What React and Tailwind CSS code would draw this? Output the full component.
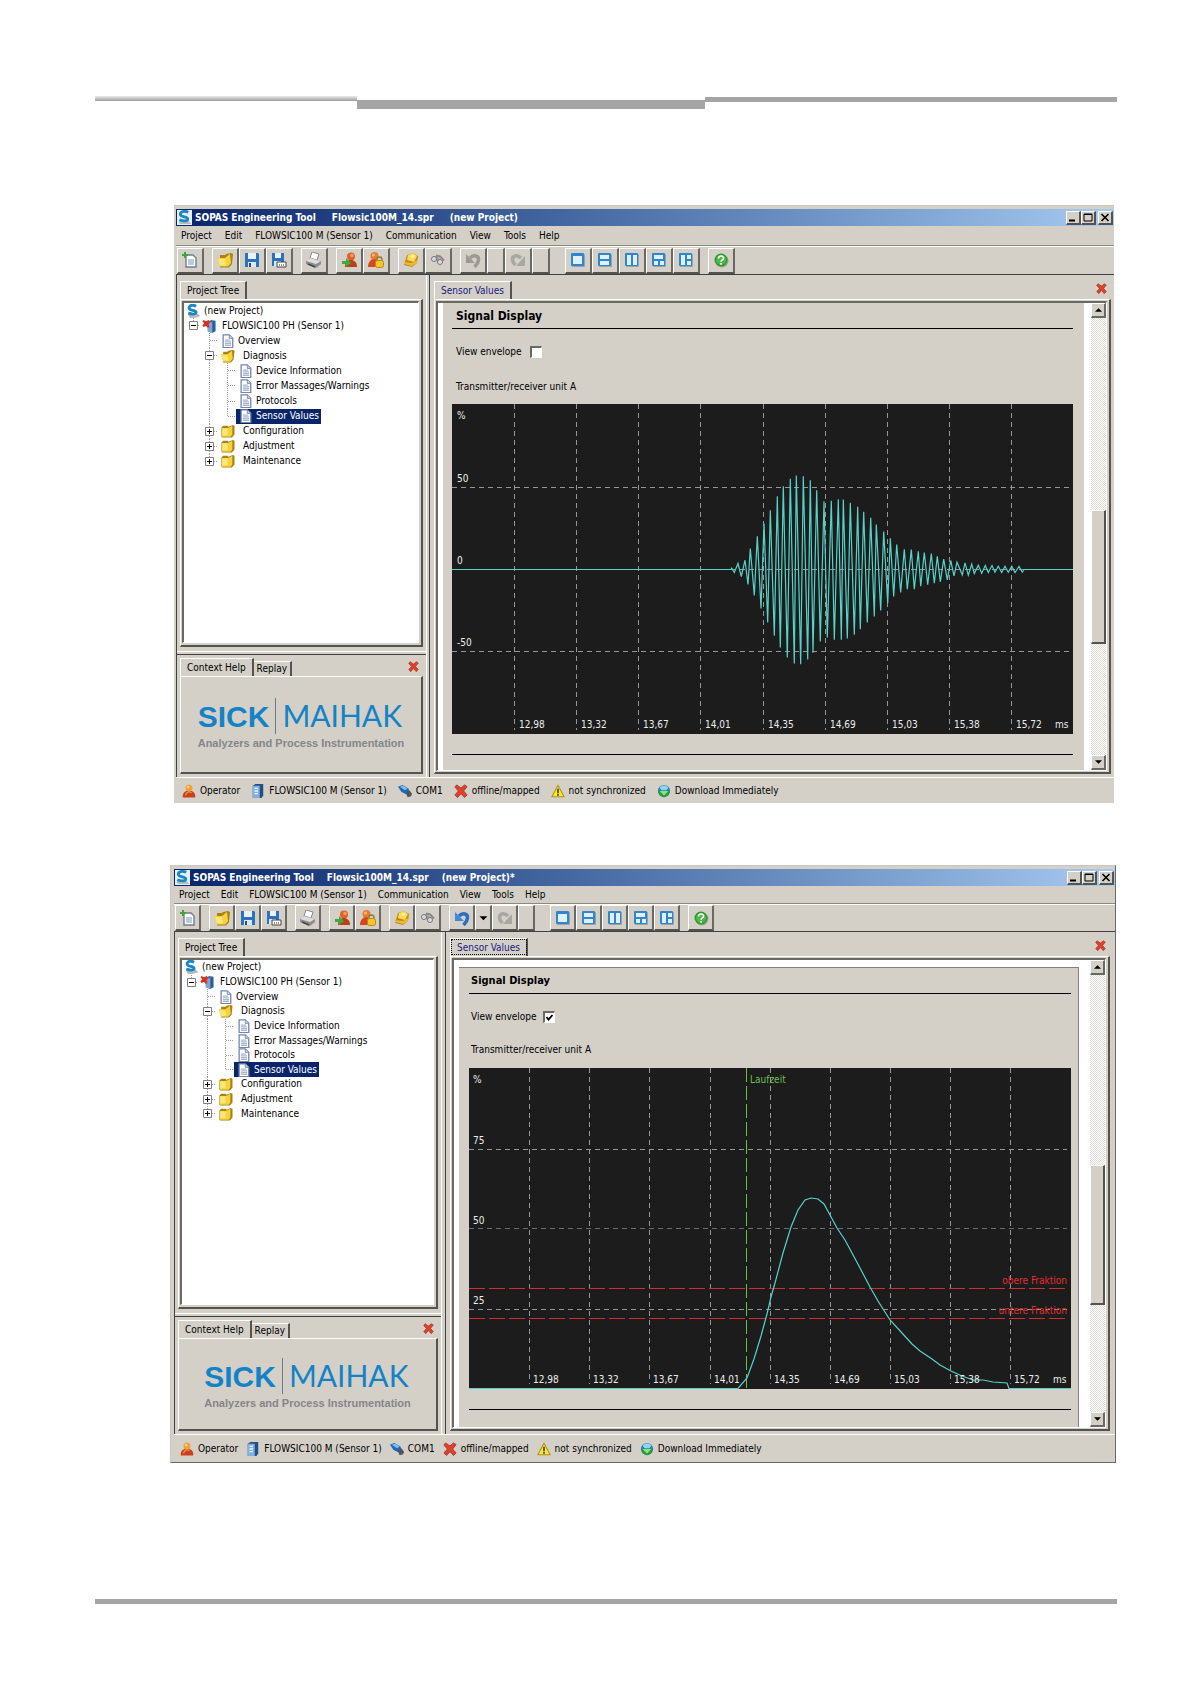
import { useId } from "react";

const menuItems = ["Project", "Edit", "FLOWSIC100 M (Sensor 1)", "Communication", "View", "Tools", "Help"];

const treeItems = [
  { label: "(new Project)", level: 0, icon: "sopas" },
  { label: "FLOWSIC100 PH (Sensor 1)", level: 1, icon: "device", box: "-" },
  { label: "Overview", level: 2, icon: "page" },
  { label: "Diagnosis", level: 2, icon: "folderOpen", box: "-" },
  { label: "Device Information", level: 3, icon: "page" },
  { label: "Error Massages/Warnings", level: 3, icon: "page" },
  { label: "Protocols", level: 3, icon: "page" },
  { label: "Sensor Values", level: 3, icon: "page", selected: true },
  { label: "Configuration", level: 2, icon: "folder", box: "+" },
  { label: "Adjustment", level: 2, icon: "folder", box: "+" },
  { label: "Maintenance", level: 2, icon: "folder", box: "+" },
];

const statusItems = [
  ["user", "Operator"],
  ["server", "FLOWSIC100 M (Sensor 1)"],
  ["plug", "COM1"],
  ["cross", "offline/mapped"],
  ["warning", "not synchronized"],
  ["globe", "Download Immediately"],
];

const timeLabels = ["12,98", "13,32", "13,67", "14,01", "14,35", "14,69", "15,03", "15,38", "15,72"];

const pane = (
  <>
    <rect x="2" y="2" width="13" height="13" rx="1" fill="#9aa2a8" />
    <rect x="1" y="1" width="13" height="13" rx="1" fill="#2f86cf" />
  </>
);

// All icons are drawn on a 16x16 grid
const icons = {
  sopas: (
    <>
      <rect width="16" height="16" fill="#e4f1f8" />
      <path d="M2 13l4-2 7 1 2 3H3z" fill="#b5bcc0" />
      <path d="M12 2.5C8 .5 3.500 1.500 3.500 4.500c0 3.500 8 2 8 5 0 2.500-4.500 2.500-9 1" fill="none" stroke="#1b86c2" strokeWidth="3" />
    </>
  ),
  sopasPlain: (
    <>
      <path d="M2 13l5-3 6 1 3 3-7 2H4z" fill="#b5bcc0" />
      <path d="M11 2.5C7 .5 3 1.500 3 4.500c0 3.500 8 2 8 5 0 2.500-4.500 2.500-9 1" fill="none" stroke="#1b86c2" strokeWidth="3.200" />
    </>
  ),
  device: (
    <>
      <path d="M6 3l4-2 5 1v12l-4 2-5-2z" fill="#3b6ea8" />
      <path d="M6 3l5 1v12l-5-2z" fill="#7fa6d2" />
      <path d="M13 3v11" stroke="#1f4778" />
      <path d="M1 1l3 1.500L7 1l2 2-2 3 1 3-2 1-2-2-3 1-1-2 2-2.500L0 3z" fill="#d9301c" />
    </>
  ),
  page: (
    <>
      <path d="M3 1h7l4 4v10.500H3z" fill="#fff" stroke="#7386ae" strokeWidth="1.500" />
      <path d="M10 1v4h4" fill="#c9d4ea" stroke="#7386ae" />
      <path d="M5 7h6M5 9h7M5 11h7M5 13h7" stroke="#a9b6d4" strokeWidth="1.600" />
    </>
  ),
  folder: (
    <>
      <path d="M1 4l2-2h5l1 1 5-2 2 1v10l-3 3.500H2l-1-1z" fill="#a98212" />
      <path d="M1.500 4.500h7l5-2.500v10l-2 2.500h-10z" fill="#f6d23c" />
      <path d="M2 5h6v8H2z" fill="#fbe678" />
    </>
  ),
  folderOpen: (
    <>
      <path d="M3 3h5l1-1 5-1 2 1-1 10-3 3.500H3z" fill="#a98212" />
      <path d="M0 6h8l5-4 1 9-3 3.500H3z" fill="#f6d23c" />
      <path d="M1 7h7l1 6.500H3z" fill="#fbe678" />
    </>
  ),
  new: (
    <>
      <path d="M4 3h7l3 3v9H4z" fill="#fff" stroke="#6b7f92" strokeWidth="1.400" />
      <path d="M6 7h6v6H6z" fill="#bccbdc" />
      <path d="M3 0v6M0 3h6" stroke="#3fa535" strokeWidth="2" />
    </>
  ),
  save: (
    <>
      <path d="M1 1h13l1 1v13H1z" fill="#2a72bd" />
      <path d="M4 1h8v6H4z" fill="#e9f2fa" />
      <path d="M4 10h8v5H4z" fill="#dfe7ee" />
      <path d="M5 11h2v4H5z" fill="#2b4e76" />
    </>
  ),
  saveAs: (
    <>
      <path d="M1 1h12v13H1z" fill="#2a72bd" />
      <path d="M4 1h6v5H4z" fill="#e9f2fa" />
      <path d="M3 9h7v5H3z" fill="#dfe7ee" />
      <path d="M6 10h9v5H6z" fill="#fff" stroke="#444" />
      <path d="M8 13h1M10 13h1M12 13h1" stroke="#222" />
    </>
  ),
  print: (
    <>
      <path d="M6 0l7 2-2 6-7-2z" fill="#fff" stroke="#888" />
      <path d="M0 9l4-3 11 3v3l-5 4-10-4z" fill="#8d8d8d" />
      <path d="M0 9l4-3 11 3-5 3z" fill="#dcdcdc" />
      <path d="M2 12l7 3" stroke="#444" strokeWidth="1.500" />
    </>
  ),
  login: (
    <>
      <circle cx="10" cy="4.500" r="4" fill="#e0602a" />
      <path d="M4 15c0-5 3-7 6-7s6 2 6 7z" fill="#b8401a" />
      <circle cx="11" cy="3.500" r="1.800" fill="#f4a056" />
      <path d="M1 9h4V6l5 5-5 4v-3H1z" fill="#3cab3c" />
    </>
  ),
  userLock: (
    <>
      <circle cx="6.500" cy="4" r="4" fill="#e97a2e" />
      <path d="M0 15c0-5 3-8 6-8s6 3 6 8z" fill="#d4481c" />
      <circle cx="5.500" cy="3" r="1.600" fill="#f9b673" />
      <path d="M9 9V7.500a2.500 2.500 0 015 0V9" fill="none" stroke="#8a7a3a" strokeWidth="1.300" />
      <rect x="7.500" y="8.500" width="8" height="7" rx="2" fill="#f4c52c" stroke="#b88a14" />
    </>
  ),
  package: (
    <>
      <path d="M4 3l6-2 5 3-1 7-5 4-8-2z" fill="#c08a12" />
      <path d="M5 3l5-2 4 3-3 6-7-2z" fill="#fbdc5a" />
      <path d="M7 4l3-1 2 1-2 2z" fill="#fff3b0" />
      <path d="M1 10l8 1 5-3v3l-5 3-8-2z" fill="#edb93a" />
    </>
  ),
  find: (
    <>
      <path d="M2 5l4-1 7 5-2 3-3-1z" fill="#9b9b9b" />
      <circle cx="4" cy="7" r="2.500" fill="#ddd" stroke="#777" />
      <circle cx="10" cy="10" r="2.500" fill="#ddd" stroke="#777" />
      <path d="M6 3.500l4 1 4 4" stroke="#888" strokeWidth="2" fill="none" />
    </>
  ),
  undo: (
    <>
      <path d="M5 6c4-4 9-2 8.500 2-.300 3-2 5-4 7" fill="none" stroke="#9c9a96" strokeWidth="3.500" />
      <path d="M1 2v9h9z" fill="#9c9a96" />
    </>
  ),
  undoActive: (
    <>
      <path d="M5 6c4-4 9-2 8.500 2-.300 3-2 5-4 7" fill="none" stroke="#2d6fbe" strokeWidth="3.500" />
      <path d="M1 2v9h9z" fill="#3f8ad4" />
    </>
  ),
  redo: (
    <>
      <path d="M11 6C7 2 2 4 2.500 8c.3 3 2 4 3 5" fill="none" stroke="#a9a7a2" strokeWidth="3.500" />
      <path d="M15 4v10H6z" fill="#a9a7a2" />
    </>
  ),
  arrow: <path d="M4 6h9L8.500 10.500z" fill="#000" />,
  single: (
    <>
      {pane}
      <path d="M3 4h9v8H3z" fill="#dff0fd" />
    </>
  ),
  rows: (
    <>
      {pane}
      <path d="M3 3h9v4H3zM3 9h9v4H3z" fill="#dff0fd" />
    </>
  ),
  columns: (
    <>
      {pane}
      <path d="M3 3h4v10H3zM9 3h4v10H9z" fill="#dff0fd" />
    </>
  ),
  topSplit: (
    <>
      {pane}
      <path d="M3 3h9v4H3zM3 9h4v4H3zM9 9h4v4H9z" fill="#dff0fd" />
    </>
  ),
  leftSplit: (
    <>
      {pane}
      <path d="M3 3h4v10H3zM9 3h4v4H9zM9 9h4v4H9z" fill="#dff0fd" />
    </>
  ),
  help: (
    <>
      <circle cx="9" cy="9" r="6.500" fill="#9aa297" />
      <circle cx="8" cy="8" r="6.500" fill="#2f9a2b" />
      <circle cx="8" cy="8" r="5" fill="#4db847" />
      <path d="M5.500 6.500c0-3.500 5.500-3 5 0-.300 1.500-2.500 1.500-2.500 3.200M8 11v1.800" fill="none" stroke="#fff" strokeWidth="1.600" />
    </>
  ),
  user: (
    <>
      <path d="M1 15.500c-1-5 3-8 7-8s8 3 7 8z" fill="#c9401a" />
      <path d="M4 13c1-4 4-5 7-3" stroke="#f09048" strokeWidth="1.500" fill="none" />
      <circle cx="8" cy="4.500" r="4" fill="#efa03a" />
      <circle cx="7" cy="3.500" r="1.500" fill="#fbd48a" />
    </>
  ),
  server: (
    <>
      <path d="M2 2l3-2h9v13l-2 3H2z" fill="#244f86" />
      <path d="M2 2h8v14H2z" fill="#7fb0e0" />
      <path d="M4 5h4M4 8h4M4 11h4" stroke="#e8f3ff" strokeWidth="1.500" />
    </>
  ),
  plug: (
    <>
      <path d="M0 3l5-2 7 4 1 4-3 3-6-3z" fill="#1f68b3" />
      <path d="M2 3l4-1 5 3-3 2z" fill="#7cc0f0" />
      <path d="M9 10l4-3 3 4-1 3-4 1z" fill="#4a5560" />
    </>
  ),
  cross: (
    <path d="M3 1l5 3.500L12 1l3 2-4 5 4 4.500-3 3-4-4.500-4 4.500-3-3L5 8 1 3.500z" fill="#e2402a" stroke="#8d2a1e" strokeWidth=".8" />
  ),
  warning: (
    <>
      <path d="M8 1.500l7 13H1z" fill="#ffe82a" stroke="#a8921c" strokeWidth="1.200" strokeLinejoin="round" />
      <path d="M8 5.500v5M8 11.500v2" stroke="#222" strokeWidth="1.600" />
    </>
  ),
  globe: (
    <>
      <circle cx="8" cy="8" r="7" fill="#2a7cb8" />
      <path d="M3 4c3-3 7-3 10 0l-2 3H5z" fill="#8fd4ee" />
      <path d="M1 8h14c-1 4-4 7-7 7s-6-3-7-7z" fill="#2f9a3a" />
      <path d="M3 8h10l-5 5z" fill="#8be86a" />
    </>
  ),
};

const Icon = ({ name, className }) => (
  <svg viewBox="0 0 16 16" className={className} aria-hidden="true">
    {icons[name]}
  </svg>
);

const toolWidths = {
  wide: "w-[27px]",
  wideSmall: "w-[26px]",
  narrow: "w-[18px]",
  narrowSmall: "w-[17px]",
};

const ToolButton = ({ icon, label, size }) => (
  <button
    type="button"
    aria-label={label}
    className={`flex h-[26px] shrink-0 items-center justify-center border-t border-l border-r-2 border-b-2 border-t-white border-l-white border-r-[#6b6964] border-b-[#55534f] bg-[#d4d0c8] ${toolWidths[size]}`}
  >
    {icon && <Icon name={icon} className="h-4 w-4" />}
  </button>
);

const Toolbar = ({ changed }) => {
  const wide = changed ? "wideSmall" : "wide";
  const narrow = changed ? "narrowSmall" : "narrow";
  return (
    <div
      className={`flex shrink-0 items-center gap-[8px] border-t border-b border-t-white border-b-[#404040] pl-px ${changed ? "h-7" : "h-[29px]"}`}
    >
      <ToolButton size={wide} icon="new" label="New" />
      <div className="flex">
        <ToolButton size={wide} icon="folderOpen" label="Open" />
        <ToolButton size={wide} icon="save" label="Save" />
        <ToolButton size={wide} icon="saveAs" label="Save as" />
      </div>
      <ToolButton size={wide} icon="print" label="Print" />
      <div className="flex">
        <ToolButton size={wide} icon="login" label="Login" />
        <ToolButton size={wide} icon="userLock" label="Logout" />
      </div>
      <div className="flex">
        <ToolButton size={wide} icon="package" label="Catalog" />
        <ToolButton size={wide} icon="find" label="Find devices" />
      </div>
      <div className="flex">
        <ToolButton size={wide} icon={changed ? "undoActive" : "undo"} label="Undo" />
        <ToolButton size={narrow} icon={changed ? "arrow" : null} label="Undo list" />
        <ToolButton size={wide} icon="redo" label="Redo" />
        <ToolButton size={narrow} label="Redo list" />
      </div>
      <div className="ml-[7px] flex">
        <ToolButton size={wide} icon="single" label="Single view" />
        <ToolButton size={wide} icon="rows" label="Two rows" />
        <ToolButton size={wide} icon="columns" label="Two columns" />
        <ToolButton size={wide} icon="topSplit" label="Split bottom" />
        <ToolButton size={wide} icon="leftSplit" label="Split right" />
      </div>
      <ToolButton size={wide} icon="help" label="Help" />
    </div>
  );
};

const CaptionButton = ({ label, children }) => (
  <button
    type="button"
    aria-label={label}
    className="h-[14px] w-[15px] border-t border-l border-r-2 border-b-2 border-t-white border-l-white border-r-[#55534f] border-b-[#55534f] bg-[#d4d0c8]"
  >
    <svg viewBox="0 0 12 11" className="h-[11px] w-[12px]" aria-hidden="true">
      {children}
    </svg>
  </button>
);

const TitleBar = ({ title, changed }) => (
  <div className="flex h-[17px] shrink-0 items-center bg-linear-to-r from-[#0a246a] to-[#a6caf0] pr-px pl-px text-[10px] font-bold text-white">
    <Icon name="sopas" className="mr-[3px] h-[15px] w-[15px]" />
    <h1 className={`flex whitespace-pre ${changed ? "gap-[13px]" : "gap-[16px]"}`}>
      <span>SOPAS Engineering Tool</span>
      <span>Flowsic100M_14.spr</span>
      <span>{title}</span>
    </h1>
    <div className="ml-auto flex">
      <CaptionButton label="Minimize">
        <path d="M2 8.500h6" stroke="#000" strokeWidth="2" />
      </CaptionButton>
      <CaptionButton label="Maximize">
        <path d="M2 2h8v7H2zM2 2.500h8" fill="none" stroke="#000" />
      </CaptionButton>
      <span className="w-[2px]" />
      <CaptionButton label="Close">
        <path d="M2.500 2l7 7M9.500 2l-7 7" stroke="#000" strokeWidth="1.600" />
      </CaptionButton>
    </div>
  </div>
);

const Connector = ({ vertical, horizontal, box, short, className = "w-[18px]" }) => (
  <svg className={`h-full shrink-0 overflow-hidden ${className}`} aria-hidden="true">
    {vertical && <path d={short ? "M9.500 0v8" : "M9.500 0v16"} stroke="#9a9a9a" strokeDasharray="1 1" />}
    {horizontal && <path d="M10 7.500h8" stroke="#9a9a9a" strokeDasharray="1 1" />}
    {box && (
      <>
        <path d="M5.500 3.500h8v8h-8z" fill="#fff" stroke="#808080" />
        <path d={box === "+" ? "M7 7.500h5M9.500 5v5" : "M7 7.500h5"} stroke="#000" />
      </>
    )}
  </svg>
);

const TreeRow = ({ item, last, endOfBranch }) => {
  const gap = item.level === 1 ? "gap-[5px]" : item.box ? "gap-[8px]" : "gap-[3px]";
  return (
    <li className="flex min-h-0 flex-1 items-center">
      {item.level === 1 && <Connector horizontal vertical short box={item.box} className="w-4" />}
      {item.level >= 2 && <span className="w-4" />}
      {item.level === 2 && <Connector vertical horizontal short={last} box={item.box} />}
      {item.level === 3 && (
        <>
          <Connector vertical />
          <Connector vertical horizontal short={endOfBranch} />
        </>
      )}
      <span className={`flex h-full items-center px-[2px] ${gap} ${item.selected ? "bg-[#0a246a] text-white" : ""}`}>
        <Icon name={item.icon === "sopas" ? "sopasPlain" : item.icon} className="h-[14px] w-[15px] shrink-0" />
        <span className="whitespace-nowrap">{item.label}</span>
      </span>
    </li>
  );
};

const tabClass = "h-[18px] border-t border-l border-r-2 border-t-white border-l-white border-r-[#55534f] px-[6px] leading-[15px] whitespace-nowrap";
const frameClass = "border-t border-l border-r-2 border-b-2 border-t-white border-l-white border-r-[#55534f] border-b-[#55534f]";
const sunkenClass = "border-t-2 border-l-2 border-r border-b border-t-[#6b6964] border-l-[#6b6964] border-r-white border-b-white";

const ProjectTree = ({ changed }) => (
  <div className={`flex shrink-0 flex-col border-b border-b-white pt-[6px] pr-[3px] pb-[4px] pl-[3px] ${changed ? "h-[382px]" : "h-[377px]"}`}>
    <div className="flex">
      <button type="button" className={tabClass}>
        Project Tree
      </button>
    </div>
    <div className={`flex min-h-0 flex-1 p-[2px] pt-px pl-px ${frameClass}`}>
      <div className={`flex-1 bg-white ${sunkenClass}`}>
        <ul className={`flex flex-col ${changed ? "h-[161px]" : "h-[166px]"}`}>
          {treeItems.map((item, i) => (
            <TreeRow key={item.label} item={item} last={i === treeItems.length - 1} endOfBranch={item.selected} />
          ))}
        </ul>
      </div>
    </div>
  </div>
);

const ContextHelp = () => (
  <div className="mt-[2px] flex min-h-0 flex-1 flex-col border-t border-t-[#404040] px-[3px] pt-[3px] pb-[3px]">
    <div className="flex items-end">
      <button type="button" className={tabClass}>
        Context Help
      </button>
      <button type="button" className="h-[15px] border-t border-r-2 border-t-white border-r-[#55534f] px-[3px] leading-[14px]">
        Replay
      </button>
      <button type="button" aria-label="Close help" className="mr-[4px] mb-[4px] ml-auto">
        <Icon name="cross" className="h-[11px] w-[11px]" />
      </button>
    </div>
    <div className={`flex min-h-0 flex-1 flex-col items-center justify-center ${frameClass}`}>
      <div>
        <div className="flex items-baseline text-[#1483c6]">
          <span className="font-['Liberation_Sans'] text-[30px] leading-[34px] font-bold">SICK</span>
          <span className="mx-[6px] w-px self-stretch bg-[#6f7b84]" />
          <span className="font-[Lato] text-[30px] leading-[34px]">MAIHAK</span>
        </div>
        <p className="mt-px font-['Liberation_Sans'] text-[11px] leading-[16px] font-bold text-[#85858a]">Analyzers and Process Instrumentation</p>
      </div>
    </div>
  </div>
);

// Peaks of the received burst: x offset and amplitude, in thirds of a unit
const peaks = [
  [95, 4], [103, -9], [114, 18], [124, -21], [135, 28], [144, -45], [151, 63], [163, -78], [172, 100], [183, -117],
  [192, 138], [203, -159], [211, 178], [223, -199], [232, 220], [241, -234], [250, 250], [262, -264], [271, 272], [283, -282],
  [289, 282], [302, -284], [310, 280], [323, -270], [331, 268], [339, -250], [350, 238], [361, -216], [372, 205], [382, -204],
  [394, 206], [403, -211], [415, 211], [424, -211], [430, 210], [442, -207], [451, 200], [463, -196], [473, 188], [481, -179],
  [491, 173], [502, -159], [512, 155], [523, -141], [529, 135], [542, -123], [551, 114], [563, -101], [571, 94], [581, -81],
  [590, 75], [602, -69], [613, 61], [622, -59], [634, 60], [643, -59], [655, 55], [662, -50], [673, 51], [683, -46],
  [694, 48], [703, -41], [712, 40], [721, -37], [731, 31], [742, -31], [752, 27], [762, -19], [771, 22], [787, -16],
  [795, 20], [805, -17], [815, 16], [823, -12], [835, 13], [845, -11], [856, 12], [865, -9], [876, 12], [885, -8],
  [895, 10], [905, -9], [915, 10], [925, -8], [935, 10], [945, -9], [957, 9], [967, -8], [972, 0],
];

const burst = "M0 165.500H279 " + peaks.map(([x, a]) => `L${(248 + x / 3).toFixed(1)} ${(165.5 - a / 3).toFixed(1)}`).join(" ") + " H621";

const SignalChart = () => (
  <svg viewBox="0 0 621 330" className="block w-full text-[10px]" role="img" aria-label="Signal of transmitter/receiver unit A">
    <rect width="621" height="330" fill="#1c1c1c" />
    <g stroke="#969696" strokeDasharray="5 4">
      {timeLabels.map((t, i) => (
        <path key={t} d={`M${62.5 + i * 62 + (i > 3 ? 1 : 0)} 0V326`} />
      ))}
      <path d="M0 83.500H617M279 165.500H572M0 247.500H617" />
    </g>
    <path d={burst} fill="none" stroke="#56d3c9" strokeWidth="1.200" />
    <g fill="#ececec">
      <text x="5" y="15">%</text>
      <text x="5" y="78">50</text>
      <text x="5" y="160">0</text>
      <text x="5" y="242">-50</text>
      {timeLabels.map((t, i) => (
        <text key={t} x={67 + i * 62 + (i > 3 ? 1 : 0)} y="324">
          {t}
        </text>
      ))}
      <text x="603" y="324">ms</text>
    </g>
  </svg>
);

const EnvelopeChart = () => (
  <svg viewBox="0 0 602 321" className="block w-full text-[10px]" role="img" aria-label="Envelope of transmitter/receiver unit A">
    <rect width="602" height="321" fill="#1c1c1c" />
    <g stroke="#969696" strokeDasharray="5 4">
      {timeLabels.map((t, i) => (
        <path key={t} d={`M${60.5 + i * 60 + (i > 2 ? 1 : 0)} 0V316`} />
      ))}
      <path d="M0 81.500H598M0 241.500H598" />
      <path d="M0 160.500H598" stroke="#6d6d6d" />
    </g>
    <path d="M0 220.500H598M0 250.500H598" stroke="#d22c2c" strokeDasharray="16 4" />
    <path d="M277.500 0V320" stroke="#66c24f" strokeDasharray="14 4" />
    <path
      d="M0 320.500H269L278 310 285 291 292 268 298 246 302 229 306 215 314 185 322 159 329 142 336 132 342 130 349 131 355 136 361 147 368 160 376 172 383 185 391 200 401 219 409 233 421 252 433 265 443 276 451 283 463 291 471 297 482 303 493 308 504 312 514 312 524 314 538 315 540 320.500H602"
      fill="none"
      stroke="#56d3c9"
      strokeWidth="1.200"
    />
    <g fill="#ececec">
      <text x="4" y="15">%</text>
      <text x="4" y="76">75</text>
      <text x="4" y="156">50</text>
      <text x="4" y="236">25</text>
      {timeLabels.map((t, i) => (
        <text key={t} x={64 + i * 60 + (i > 2 ? 1 : 0)} y="315">
          {t}
        </text>
      ))}
      <text x="584" y="315">ms</text>
    </g>
    <text x="281" y="15" fill="#66c24f">
      Laufzeit
    </text>
    <g fill="#e03030" textAnchor="end">
      <text x="598" y="216">obere Fraktion</text>
      <text x="598" y="246">untere Fraktion</text>
    </g>
  </svg>
);

const scrollButton = "flex h-[15px] shrink-0 items-center justify-center border-t border-l border-r-2 border-b-2 border-t-white border-l-white border-r-[#6b6964] border-b-[#6b6964] bg-[#d4d0c8]";

const ScrollBar = ({ changed }) => (
  <div className="flex w-[15px] shrink-0 flex-col bg-[repeating-conic-gradient(#fff_0_25%,#dedbd5_0_50%)] bg-[length:2px_2px]">
    <button type="button" aria-label="Scroll up" className={scrollButton}>
      <svg viewBox="0 0 8 4" className="h-[4px] w-[7px]" aria-hidden="true">
        <path d="M0 4h8L4 0z" />
      </svg>
    </button>
    <div className={`flex-1 ${changed ? "pt-[190px]" : "pt-[192px]"}`}>
      <div
        className={`border-t border-l border-r-2 border-b-2 border-t-white border-l-white border-r-[#55534f] border-b-[#55534f] bg-[#d4d0c8] ${changed ? "h-[140px]" : "h-[134px]"}`}
      />
    </div>
    <button type="button" aria-label="Scroll down" className={scrollButton}>
      <svg viewBox="0 0 8 4" className="h-[4px] w-[7px]" aria-hidden="true">
        <path d="M0 0h8L4 4z" />
      </svg>
    </button>
  </div>
);

const SensorValues = ({ changed }) => {
  const id = useId();
  const indent = changed ? "pl-[2px]" : "pl-[4px]";
  return (
    <section className={`flex min-w-0 flex-1 flex-col border-l border-l-[#404040] pt-[6px] pb-[3px] pl-[4px] ${changed ? "ml-[3px] pr-[5px]" : "ml-[2px] pr-[3px]"}`}>
      <div className="flex items-center">
        <button type="button" className={`text-[#1a1a80] ${tabClass} ${changed ? "outline-1 -outline-offset-2 outline-black outline-dotted" : ""}`}>
          Sensor Values
        </button>
        <button type="button" aria-label="Close sensor values" className="mr-[4px] mb-[4px] ml-auto">
          <Icon name="cross" className="h-[11px] w-[11px]" />
        </button>
      </div>
      <div className={`flex min-h-0 flex-1 pt-px pr-[2px] pb-px pl-px ${frameClass}`}>
        <div className={`flex min-w-0 flex-1 bg-white pl-[5px] ${sunkenClass}`}>
          <div
            className={`flex min-w-0 flex-1 flex-col overflow-hidden bg-[#d4d0c8] ${changed ? "mt-[7px] mr-[11px] border-t border-r border-[#808080] pr-[7px] pl-[10px]" : "mr-[7px] pr-[11px] pl-[9px]"}`}
          >
            <h2 className={`h-[26px] shrink-0 border-b border-black leading-[26px] font-bold ${indent} ${changed ? "text-[11px]" : "text-[12px]"}`}>
              Signal Display
            </h2>
            <div className={`flex h-[46px] shrink-0 items-center ${indent} ${changed ? "gap-[6px]" : "gap-[8px]"}`}>
              <label htmlFor={id}>View envelope</label>
              <span className="relative h-[12px] w-[12px]">
                <input
                  id={id}
                  type="checkbox"
                  defaultChecked={changed}
                  className="peer block h-[12px] w-[12px] appearance-none border-t-2 border-l-2 border-r border-b border-t-[#6b6964] border-l-[#6b6964] border-r-white border-b-white bg-white"
                />
                <svg viewBox="0 0 12 12" className="pointer-events-none absolute inset-0 hidden peer-checked:block" aria-hidden="true">
                  <path d="M3.500 6l2 2.500L9.500 4" fill="none" stroke="#000" strokeWidth="1.800" />
                </svg>
              </span>
            </div>
            <p className={`shrink-0 ${indent} ${changed ? "mb-[8px] h-5 leading-[20px]" : "mb-[5px] h-6 leading-[24px]"}`}>Transmitter/receiver unit A</p>
            {changed ? <EnvelopeChart /> : <SignalChart />}
            <hr className="mt-[20px] border-black" />
          </div>
          <ScrollBar changed={changed} />
        </div>
      </div>
    </section>
  );
};

const SopasWindow = ({ title, changed = false }) => (
  <div
    className={`flex flex-col border-t border-t-[#c9c7c0] bg-[#d4d0c8] pt-[3px] font-['DejaVu_Sans_Condensed','DejaVu_Sans',sans-serif] text-[10px] leading-[14px] text-black ${changed ? "mr-[74px] ml-[170px] border-r border-b border-l border-r-[#6b6964] border-b-[#6b6964] border-l-[#c9c7c0] pl-[3px]" : "mr-[76px] ml-[174px] pl-[2px]"}`}
  >
    <TitleBar title={title} changed={changed} />
    <nav className={`flex shrink-0 items-center border-b border-b-[#8a8881] pl-[5px] ${changed ? "h-[18px] gap-[11px]" : "h-5 gap-[13px]"}`}>
      {menuItems.map((m) => (
        <button key={m} type="button" className="whitespace-nowrap">
          {m}
        </button>
      ))}
    </nav>
    <Toolbar changed={changed} />
    <div className="flex h-[502px] shrink-0">
      <aside className={`flex shrink-0 flex-col border-r border-l border-r-white border-l-[#404040] ${changed ? "w-[268px]" : "w-[251px]"}`}>
        <ProjectTree changed={changed} />
        <ContextHelp />
      </aside>
      <SensorValues changed={changed} />
    </div>
    <footer className={`flex shrink-0 items-center border-t border-t-white pl-[6px] ${changed ? "h-7 gap-[8px]" : "h-[26px] gap-[11px]"}`}>
      {statusItems.map(([icon, text]) => (
        <span key={text} className="flex items-center gap-[4px] whitespace-nowrap">
          <Icon name={icon} className="h-[14px] w-[14px]" />
          {text}
        </span>
      ))}
    </footer>
  </div>
);

export default function App() {
  return (
    <div className="min-h-screen bg-white pt-24 pb-[79px]">
      {/* Stepped page rule */}
      <div className="mr-[73px] ml-[95px] flex h-[13px] items-start">
        <div className="h-[5px] flex-[262] bg-linear-to-b from-[#ececec] to-[#9c9c9c]" />
        <div className="mt-[4px] h-[9px] flex-[348] bg-[#a5a5a5]" />
        <div className="mt-px h-[5px] flex-[412] bg-[#a5a5a5]" />
      </div>

      <main className="flex flex-col gap-[62px] pt-24 pb-[136px]">
        <SopasWindow title="(new Project)" />
        <SopasWindow title="(new Project)*" changed />
      </main>

      <div className="mr-[73px] ml-[95px] h-[5px] bg-[#a5a5a5]" />
    </div>
  );
}
